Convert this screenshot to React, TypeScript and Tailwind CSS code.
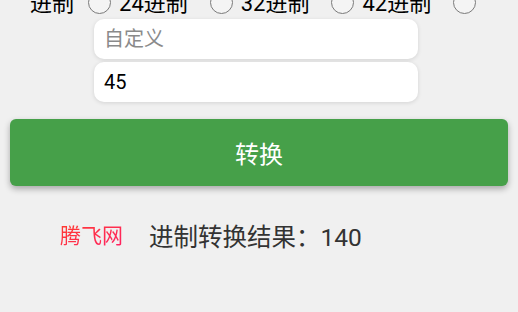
import React from "react";

const font = { fontFamily: 'Roboto, "Noto Sans CJK SC", sans-serif' };

function Radio() {
  return <span className="inline-block w-[23px] h-[23px] rounded-full border border-[#7a7a7a] bg-[#f4f4f4] shrink-0" />;
}

export default function App() {
  const items = ["24进制", "32进制", "42进制"];
  return (
    <div className="w-[518px] h-[312px] overflow-hidden bg-[#f0f0f0]" style={font}>
      <div className="flex items-center h-[32px] mt-[-14px] pl-[30px] text-[22px] text-black leading-[32px]">
        <span className="mr-[14px] pt-[4px]">进制</span>
        {items.map((t) => (
          <React.Fragment key={t}>
            <Radio />
            <span className="ml-[8px] mr-[22px] whitespace-nowrap pt-[4px]">{t}</span>
          </React.Fragment>
        ))}
        <Radio />
      </div>
      <div className="flex flex-col gap-[3px] ml-[94px] mt-[1px] w-[324px]">
        <div className="h-[40px] rounded-[10px] bg-white shadow-[0_1px_4px_rgba(0,0,0,0.12)] flex items-center pl-[10px] text-[20px] text-[#8a8a8a]">
          自定义
        </div>
        <div className="h-[40px] rounded-[10px] bg-white shadow-[0_1px_4px_rgba(0,0,0,0.12)] flex items-center pl-[10px] text-[20px] text-black">
          45
        </div>
      </div>
      <div className="mx-[10px] mt-[17px] h-[67px] rounded-[6px] bg-[#46a049] shadow-[0_3px_6px_rgba(0,0,0,0.3)] flex items-center justify-center text-white text-[24px] pt-[4px]">
        转换
      </div>
      <div className="flex items-center mt-[31px] h-[40px]">
        <span className="ml-[60px] text-[21px] bg-gradient-to-br from-[#ff3b28] to-[#ff1a66] bg-clip-text text-transparent">
          腾飞网
        </span>
        <span className="ml-[26px] text-[24.5px] text-[#333333] pt-[2px]">进制转换结果：140</span>
      </div>
    </div>
  );
}
